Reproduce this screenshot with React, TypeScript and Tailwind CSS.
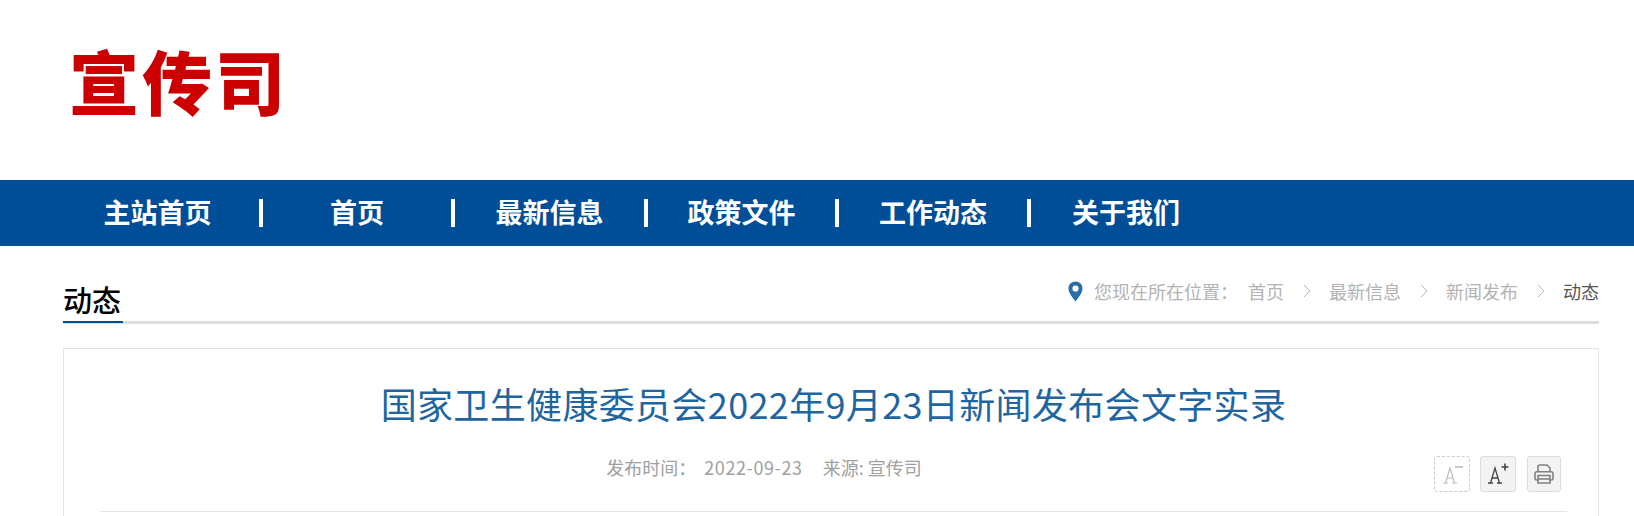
const cjk = "font-['Noto_Sans_CJK_SC','Noto_Sans',sans-serif]";

const navItems = [
  { label: "主站首页", width: "w-[203px] pr-[4px]", sep: true },
  { label: "首页", width: "w-[192px]", sep: true },
  { label: "最新信息", width: "w-[193px]", sep: true },
  { label: "政策文件", width: "w-[191px]", sep: true },
  { label: "工作动态", width: "w-[192px]", sep: true },
  { label: "关于我们", width: "w-[190px]", sep: false },
];

const crumbs = ["首页", "最新信息", "新闻发布"];

function PinIcon() {
  return (
    <svg width="15" height="21" viewBox="0 0 15 21" className="mr-[11px]">
      <path
        d="M7.5 0.5C3.4 0.5 0.5 3.5 0.5 7.4C0.5 11.8 5 17 7.5 20.5C10 17 14.5 11.8 14.5 7.4C14.5 3.5 11.6 0.5 7.5 0.5Z"
        fill="#2a6ea8"
      />
      <circle cx="7.5" cy="7.5" r="3.1" fill="#fff" />
    </svg>
  );
}

function Chevron() {
  return (
    <svg width="8" height="14" viewBox="0 0 8 14" fill="none" stroke="#b8b8b8" className="ml-[19px] mr-[18px]">
      <path d="M1 1L7 7L1 13" />
    </svg>
  );
}

function FontSmallIcon() {
  return (
    <svg width="28" height="28" viewBox="0 0 28 28" fill="none" stroke="#bdbdbd" strokeWidth="1.2">
      <path d="M5 23H10M14 23H19M7.5 23L12 8L16.5 23M9 18H15" />
      <path d="M17 7H25" strokeWidth="1.6" />
    </svg>
  );
}

function FontLargeIcon() {
  return (
    <svg width="28" height="28" viewBox="0 0 28 28" fill="none" stroke="#444" strokeWidth="1.3">
      <path d="M4 23H9M13 23H18M6.5 23L11 8L15.5 23M8 18H14" />
      <path d="M17.5 7H24.5M21 3.5V10.5" strokeWidth="1.6" />
    </svg>
  );
}

function PrintIcon() {
  return (
    <svg width="20" height="20" viewBox="0 0 20 20" fill="none" stroke="#808080" strokeWidth="1.6">
      <path d="M4 8V3C4 2 5 1 6 1H13L16 4V8" />
      <path d="M4 16H2.5C1.5 16 1 15.4 1 14.5V9.5C1 8.4 1.6 7.8 2.6 7.8H17.4C18.4 7.8 19 8.4 19 9.5V14.5C19 15.4 18.5 16 17.5 16H16" />
      <path d="M4 11.5H16V19H4ZM4 15H16" />
    </svg>
  );
}

export default function App() {
  return (
    <div className={`h-[516px] w-[1634px] overflow-hidden bg-white ${cjk}`}>
      <header className="flex h-[180px] items-start pl-[69px] pt-[30px]">
        <div className="text-[70px] font-black leading-[100px] tracking-[3px] text-[#cc0000] blur-[0.5px]">
          宣传司
        </div>
      </header>

      <nav className="flex h-[66px] items-center bg-[#004e97] pl-[60px]">
        {navItems.map((item) => (
          <div
            key={item.label}
            className={`flex h-[28px] items-center justify-center text-[27px] font-bold leading-none text-white ${item.width} ${
              item.sep ? "border-r-[4px] border-white" : ""
            }`}
          >
            <span className="-mt-[3px]">{item.label}</span>
          </div>
        ))}
      </nav>

      <main className="ml-[63px] mt-[33px] w-[1536px]">
        <div className="flex h-[45px] items-end justify-between border-b-[3px] border-[#dddddd]">
          <h2 className="-mb-[2px] h-[45px] w-[60px] border-b-2 border-[#004e97] text-[29px] font-medium leading-[42px] text-black">
            动态
          </h2>
          <div className="mb-[18px] flex items-center text-[18px] leading-[24px] text-[#b3b3b3]">
            <PinIcon />
            <span className="mr-[10px]">您现在所在位置：</span>
            {crumbs.map((c) => (
              <span key={c} className="flex items-center">
                <span>{c}</span>
                <Chevron />
              </span>
            ))}
            <span className="text-[#555555]">动态</span>
          </div>
        </div>

        <section className="mt-[24px] h-[200px] border border-[#e5e5e5] pl-[36px] pr-[31px] pt-[26px]">
          <h1 className="text-center text-[36px] font-normal leading-[56px] tracking-[0.35px] text-[#1f659f]">
            国家卫生健康委员会2022年9月23日新闻发布会文字实录
          </h1>
          <div className="relative mt-[17px] h-[64px] border-b border-[#e5e5e5] pr-[139px] pt-[6px] text-center text-[18px] leading-[26px] text-[#a0a0a0]">
            发布时间：&nbsp;&nbsp;<span className="tracking-[0.6px]">2022-09-23</span>&nbsp;&nbsp;&nbsp;&nbsp;&nbsp;来源: 宣传司
            <div className="absolute right-[6px] top-[8px] flex items-center gap-[10px]">
              <button className="flex h-[36px] w-[36px] items-center justify-center rounded-[3px] border border-dashed border-[#cccccc]">
                <FontSmallIcon />
              </button>
              <button className="mr-[1px] flex h-[36px] w-[36px] items-center justify-center rounded-[3px] border border-[#dddddd] bg-[#f3f3f3]">
                <FontLargeIcon />
              </button>
              <button className="flex h-[36px] w-[34px] items-center justify-center rounded-[3px] border border-[#dddddd] bg-[#f3f3f3]">
                <PrintIcon />
              </button>
            </div>
          </div>
        </section>
      </main>
    </div>
  );
}
